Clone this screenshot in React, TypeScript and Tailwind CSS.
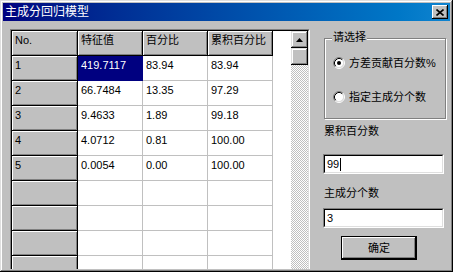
import React from 'react';

const rows: string[][] = [
  ['1', '419.7117', '83.94', '83.94'],
  ['2', '66.7484', '13.35', '97.29'],
  ['3', '9.4633', '1.89', '99.18'],
  ['4', '4.0712', '0.81', '100.00'],
  ['5', '0.0054', '0.00', '100.00'],
  ['', '', '', ''],
  ['', '', '', ''],
  ['', '', '', ''],
  ['', '', '', ''],
];

const Radio: React.FC<{ checked?: boolean }> = ({ checked }) => (
  <svg width="12" height="12" viewBox="0 0 12 12" className="shrink-0">
    <circle cx="6" cy="6" r="4.5" fill="#fff" />
    <path d="M2.11 9.89 A5.5 5.5 0 0 1 9.89 2.11" fill="none" stroke="#808080" strokeWidth="1" />
    <path d="M9.89 2.11 A5.5 5.5 0 0 1 2.11 9.89" fill="none" stroke="#fff" strokeWidth="1" />
    <path d="M2.82 9.18 A4.5 4.5 0 0 1 9.18 2.82" fill="none" stroke="#000" strokeWidth="1" />
    <path d="M9.18 2.82 A4.5 4.5 0 0 1 2.82 9.18" fill="none" stroke="#dfdfdf" strokeWidth="1" />
    {checked && <circle cx="6" cy="6" r="2" fill="#000" />}
  </svg>
);

const Sunken: React.FC<{ className?: string; children?: React.ReactNode }> = ({ className, children }) => (
  <div className={`border border-t-[#808080] border-l-[#808080] border-b-white border-r-white ${className ?? ''}`}>
    <div className="h-full border border-t-black border-l-black border-b-[#dfdfdf] border-r-[#dfdfdf]">{children}</div>
  </div>
);

export default function App() {
  return (
    <div className="w-[453px] h-[272px] bg-[#c0c0c0] p-[3px] flex flex-col overflow-hidden text-[11px] text-black font-['Liberation_Sans','Noto_Sans_CJK_SC',sans-serif] shadow-[inset_-1px_-1px_0_#000,inset_1px_1px_0_#dfdfdf,inset_-2px_-2px_0_#808080,inset_2px_2px_0_#fff]">
      {/* title bar */}
      <div className="h-[18px] shrink-0 flex items-center justify-between pl-[2px] pr-[2px] bg-linear-to-r from-[#000080] to-[#1084d0]">
        <span className="text-white text-[12px] leading-[14px]">主成分回归模型</span>
        <div className="w-[16px] h-[14px] bg-[#c0c0c0] flex items-center justify-center shadow-[inset_-1px_-1px_0_#000,inset_1px_1px_0_#fff,inset_-2px_-2px_0_#808080]">
          <svg width="8" height="7" viewBox="0 0 8 7">
            <path d="M0.5 0.5 L7.5 6.5 M7.5 0.5 L0.5 6.5" stroke="#000" strokeWidth="1.6" />
          </svg>
        </div>
      </div>

      <div className="flex-1 flex overflow-hidden">
        {/* grid */}
        <Sunken className="ml-[7px] mt-[8px] w-[300px] h-[260px] shrink-0">
          <div className="flex h-full">
            <div className="w-[279px] bg-white">
              <div className="flex">
                {['No.', '特征值', '百分比', '累积百分比'].map((h, i) => (
                  <div
                    key={h}
                    className={`${i === 0 ? 'w-[66px]' : 'w-[65px]'} h-[25px] bg-[#c0c0c0] border-r border-b border-black px-[3px] pt-[3px] leading-[13px] shadow-[inset_1px_1px_0_#fff,inset_-1px_-1px_0_#808080]`}
                  >
                    {h}
                  </div>
                ))}
              </div>
              {rows.map((r, ri) => (
                <div key={ri} className="flex">
                  <div className="w-[66px] h-[25px] bg-[#c0c0c0] border-r border-b border-black px-[3px] pt-[3px] leading-[13px] shadow-[inset_1px_1px_0_#fff,inset_-1px_-1px_0_#808080]">
                    {r[0]}
                  </div>
                  {r.slice(1).map((c, ci) => (
                    <div
                      key={ci}
                      className={`w-[65px] h-[25px] border-r border-b px-[3px] pt-[3px] leading-[13px] ${
                        ri === 0 && ci === 0 ? 'bg-[#000080] text-white border-[#000080]' : 'border-[#c0c0c0]'
                      }`}
                    >
                      {c}
                    </div>
                  ))}
                </div>
              ))}
            </div>
            {/* scrollbar */}
            <div className="w-[17px] flex flex-col">
              <div className="h-[17px] bg-[#c0c0c0] flex items-center justify-center shadow-[inset_-1px_-1px_0_#000,inset_1px_1px_0_#dfdfdf,inset_-2px_-2px_0_#808080,inset_2px_2px_0_#fff]">
                <svg width="7" height="4" viewBox="0 0 7 4">
                  <path d="M3.5 0 L7 4 L0 4 Z" fill="#000" />
                </svg>
              </div>
              <div className="h-[17px] bg-[#c0c0c0] shadow-[inset_-1px_-1px_0_#000,inset_1px_1px_0_#dfdfdf,inset_-2px_-2px_0_#808080,inset_2px_2px_0_#fff]" />
              <div className="flex-1 bg-[image:repeating-conic-gradient(#fff_0_25%,#c0c0c0_0_50%)] bg-[length:2px_2px]" />
            </div>
          </div>
        </Sunken>

        {/* right panel */}
        <div className="flex-1 flex flex-col">
          <div className="relative ml-[14px] mt-[17px] w-[122px] h-[81px] border border-[#808080] shadow-[1px_1px_0_#fff,inset_1px_1px_0_#fff]">
            <span className="absolute -top-[8px] left-[7px] px-[1px] bg-[#c0c0c0] leading-[13px]">请选择</span>
            <div className="flex flex-col pl-[8px] pt-[18px] gap-[22px]">
              <div className="flex items-center gap-[4px] h-[12px]">
                <Radio checked />
                <span className="leading-[13px]">方差贡献百分数%</span>
              </div>
              <div className="flex items-center gap-[4px] h-[12px]">
                <Radio />
                <span className="leading-[13px]">指定主成分个数</span>
              </div>
            </div>
          </div>

          <div className="ml-[14px] mt-[6px] leading-[13px]">累积百分数</div>
          <Sunken className="ml-[13px] mt-[16px] w-[121px] h-[20px] shrink-0">
            <div className="h-full bg-white flex items-center pl-[2px] leading-[13px]">
              99<span className="w-px h-[13px] bg-black ml-[1px]" />
            </div>
          </Sunken>

          <div className="ml-[14px] mt-[13px] leading-[13px]">主成分个数</div>
          <Sunken className="ml-[13px] mt-[8px] w-[121px] h-[20px] shrink-0">
            <div className="h-full bg-white flex items-center pl-[2px] leading-[13px]">3</div>
          </Sunken>

          <div className="ml-[31px] mt-[8px] w-[76px] h-[24px] shrink-0 border border-black">
            <div className="h-full bg-[#c0c0c0] flex items-center justify-center shadow-[inset_-1px_-1px_0_#000,inset_1px_1px_0_#fff,inset_-2px_-2px_0_#808080]">
              确定
            </div>
          </div>
        </div>
      </div>
    </div>
  );
}
